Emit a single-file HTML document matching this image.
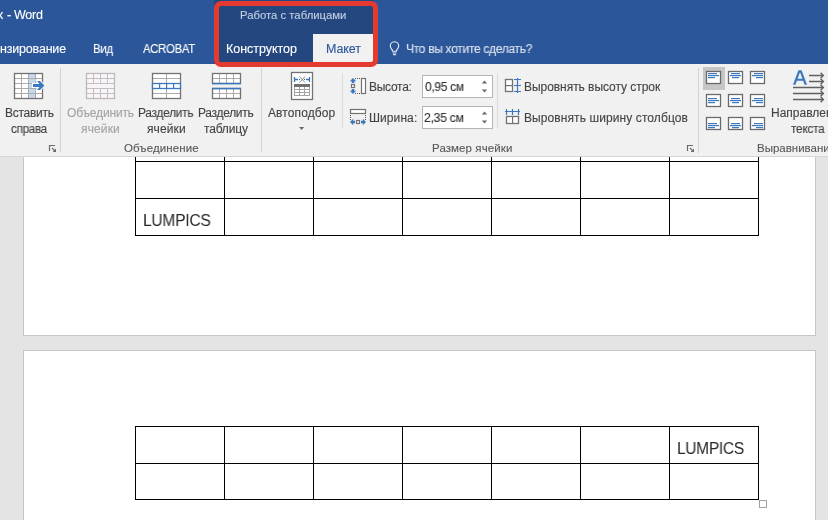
<!DOCTYPE html>
<html><head><meta charset="utf-8">
<style>
*{margin:0;padding:0;box-sizing:border-box}
html,body{width:828px;height:520px;overflow:hidden;background:#e4e4e4;font-family:"Liberation Sans",sans-serif}
.t{position:absolute;white-space:nowrap;line-height:1;transform-origin:0 0;will-change:transform;-webkit-text-stroke:0.12px currentColor}
.b{position:absolute}
.page{position:absolute;background:#fff;border:1px solid #c6c6c6}
.hl{position:absolute;height:1px;background:#000}
.vl{position:absolute;width:1px;background:#000}
</style></head><body>
<div class="page" style="left:23px;top:100px;width:793px;height:236px"></div>
<div class="page" style="left:23px;top:350px;width:793px;height:200px"></div>
<div class="hl" style="left:135px;top:124px;width:624px"></div>
<div class="hl" style="left:135px;top:161px;width:624px"></div>
<div class="hl" style="left:135px;top:198px;width:624px"></div>
<div class="hl" style="left:135px;top:235px;width:624px"></div>
<div class="vl" style="left:135px;top:124px;height:112px"></div>
<div class="vl" style="left:224px;top:124px;height:112px"></div>
<div class="vl" style="left:313px;top:124px;height:112px"></div>
<div class="vl" style="left:402px;top:124px;height:112px"></div>
<div class="vl" style="left:491px;top:124px;height:112px"></div>
<div class="vl" style="left:580px;top:124px;height:112px"></div>
<div class="vl" style="left:669px;top:124px;height:112px"></div>
<div class="vl" style="left:758px;top:124px;height:112px"></div>
<div class="hl" style="left:135px;top:426px;width:624px"></div>
<div class="hl" style="left:135px;top:463px;width:624px"></div>
<div class="hl" style="left:135px;top:499px;width:624px"></div>
<div class="vl" style="left:135px;top:426px;height:74px"></div>
<div class="vl" style="left:224px;top:426px;height:74px"></div>
<div class="vl" style="left:313px;top:426px;height:74px"></div>
<div class="vl" style="left:402px;top:426px;height:74px"></div>
<div class="vl" style="left:491px;top:426px;height:74px"></div>
<div class="vl" style="left:580px;top:426px;height:74px"></div>
<div class="vl" style="left:669px;top:426px;height:74px"></div>
<div class="vl" style="left:758px;top:426px;height:74px"></div>

<div class="b" style="left:759px;top:500px;width:8px;height:8px;border:1px solid #a0a0a0;background:#fff"></div>
<div class="b" style="left:0;top:64px;width:828px;height:93px;background:#f1f1f1;border-bottom:1px solid #d6d6d6"></div>
<div class="b" style="left:0;top:0;width:828px;height:64px;background:#2b579a"></div>
<div class="b" style="left:214px;top:0;width:160px;height:64px;background:#23477e"></div>
<div class="b" style="left:313px;top:34px;width:61px;height:28px;background:#f1f1f1"></div>
<div class="b" style="left:214px;top:1px;width:164px;height:66px;border:5px solid #e53a2f;border-radius:7px"></div>
<svg class="b" style="left:0;top:0" width="828" height="520" viewBox="0 0 828 520">
<rect x="14" y="73" width="29" height="26" fill="#fff"/>
<rect x="29" y="74" width="6" height="24" fill="#c6d9ee"/>
<rect x="21" y="73" width="1" height="26" fill="#ababab"/>
<rect x="28" y="73" width="1" height="26" fill="#ababab"/>
<rect x="35" y="73" width="1" height="26" fill="#ababab"/>
<rect x="14" y="78" width="29" height="1" fill="#ababab"/>
<rect x="14" y="83" width="29" height="1" fill="#ababab"/>
<rect x="14" y="88" width="29" height="1" fill="#ababab"/>
<rect x="14" y="93" width="29" height="1" fill="#ababab"/>
<rect x="14.5" y="73.5" width="28" height="25" fill="none" stroke="#727272" stroke-width="1.3"/>
<path d="M32 83 H37 L35.5 80 H40.5 L45.5 85.5 L40.5 91 H35.5 L37 88 H32 Z" fill="#fff"/>
<path d="M33 84 H39.5 L37 81 H40 L44.5 85.5 L40 90 H37 L39.5 87 H33 Z" fill="#3b78bf"/>
<rect x="86" y="73" width="29" height="26" fill="#f8f4f8"/>
<rect x="93" y="73" width="1" height="10" fill="#c2bec2"/>
<rect x="93" y="88" width="1" height="11" fill="#c2bec2"/>
<rect x="100" y="73" width="1" height="10" fill="#c2bec2"/>
<rect x="100" y="88" width="1" height="11" fill="#c2bec2"/>
<rect x="107" y="73" width="1" height="10" fill="#c2bec2"/>
<rect x="107" y="88" width="1" height="11" fill="#c2bec2"/>
<rect x="86" y="78" width="29" height="1" fill="#c2bec2"/>
<rect x="86" y="83" width="29" height="1" fill="#c2bec2"/>
<rect x="86" y="88" width="29" height="1" fill="#c2bec2"/>
<rect x="86" y="93" width="29" height="1" fill="#c2bec2"/>
<rect x="86.5" y="73.5" width="28" height="25" fill="none" stroke="#bdb9bd" stroke-width="1.3"/>
<rect x="152" y="73" width="29" height="26" fill="#fff"/>
<rect x="166" y="73" width="1" height="26" fill="#ababab"/>
<rect x="152" y="78" width="29" height="1" fill="#ababab"/>
<rect x="152" y="93" width="29" height="1" fill="#ababab"/>
<rect x="152.5" y="73.5" width="28" height="25" fill="none" stroke="#727272" stroke-width="1.3"/>
<rect x="152.5" y="83.5" width="28" height="5" fill="#fff" stroke="#3b78bf" stroke-width="1.3"/>
<rect x="159" y="83" width="1.2" height="6" fill="#3b78bf"/>
<rect x="166" y="83" width="1.2" height="6" fill="#3b78bf"/>
<rect x="173" y="83" width="1.2" height="6" fill="#3b78bf"/>
<rect x="212" y="73" width="29" height="11" fill="#fff"/>
<rect x="219" y="73" width="1" height="11" fill="#ababab"/>
<rect x="226" y="73" width="1" height="11" fill="#ababab"/>
<rect x="233" y="73" width="1" height="11" fill="#ababab"/>
<rect x="212" y="78" width="29" height="1" fill="#ababab"/>
<rect x="212.5" y="73.5" width="28" height="10" fill="none" stroke="#727272" stroke-width="1.3"/>
<rect x="212" y="82.8" width="29" height="1.5" fill="#3b78bf"/>
<rect x="212" y="88" width="29" height="11" fill="#fff"/>
<rect x="219" y="88" width="1" height="11" fill="#ababab"/>
<rect x="226" y="88" width="1" height="11" fill="#ababab"/>
<rect x="233" y="88" width="1" height="11" fill="#ababab"/>
<rect x="212" y="93" width="29" height="1" fill="#ababab"/>
<rect x="212.5" y="88.5" width="28" height="10" fill="none" stroke="#727272" stroke-width="1.3"/>
<rect x="212" y="87.8" width="29" height="1.5" fill="#3b78bf"/>
<rect x="291.5" y="72.5" width="21" height="27" fill="#fff" stroke="#727272" stroke-width="1.3"/>
<path d="M294.5 77 V82 M294.5 79.5 H298 M309.5 77 V82 M309.5 79.5 H306" stroke="#3b78bf" stroke-width="1.3" fill="none"/>
<path d="M299.5 76.5 L305 82.5 M305 76.5 L299.5 82.5" stroke="#8c8c8c" stroke-width="1" fill="none"/>
<rect x="299" y="79" width="1" height="1" fill="#555"/><rect x="304" y="79" width="1" height="1" fill="#555"/>
<rect x="294" y="84" width="16" height="12" fill="#a3a3a3"/>
<rect x="294" y="84" width="16" height="3" fill="#6f6f6f"/>
<rect x="295" y="87" width="4" height="2" fill="#fff"/>
<rect x="295" y="90" width="4" height="2" fill="#fff"/>
<rect x="295" y="93" width="4" height="2" fill="#fff"/>
<rect x="300" y="87" width="4" height="2" fill="#fff"/>
<rect x="300" y="90" width="4" height="2" fill="#fff"/>
<rect x="300" y="93" width="4" height="2" fill="#fff"/>
<rect x="305" y="87" width="4" height="2" fill="#fff"/>
<rect x="305" y="90" width="4" height="2" fill="#fff"/>
<rect x="305" y="93" width="4" height="2" fill="#fff"/>
<rect x="361.5" y="78.5" width="4" height="15" fill="#fff" stroke="#727272" stroke-width="1.2"/>
<rect x="355" y="78" width="1" height="1" fill="#555"/><rect x="355" y="93" width="1" height="1" fill="#555"/>
<rect x="357" y="78" width="1" height="1" fill="#555"/><rect x="357" y="93" width="1" height="1" fill="#555"/>
<rect x="359" y="78" width="1" height="1" fill="#555"/><rect x="359" y="93" width="1" height="1" fill="#555"/>
<path d="M353 78 L356.2 81.2 L354.3 81.2 L354.3 83 L351.7 83 L351.7 81.2 L349.8 81.2 Z" fill="#3b78bf"/>
<path d="M353 94 L356.2 90.8 L354.3 90.8 L354.3 89 L351.7 89 L351.7 90.8 L349.8 90.8 Z" fill="#3b78bf"/>
<rect x="351.5" y="84.5" width="3" height="3" fill="#fff" stroke="#727272" stroke-width="1.2"/>
<rect x="350.5" y="109.5" width="15" height="4" fill="#fff" stroke="#727272" stroke-width="1.2"/>
<rect x="350" y="115" width="1" height="1" fill="#555"/><rect x="365" y="115" width="1" height="1" fill="#555"/>
<rect x="350" y="117" width="1" height="1" fill="#555"/><rect x="365" y="117" width="1" height="1" fill="#555"/>
<rect x="350" y="119" width="1" height="1" fill="#555"/><rect x="365" y="119" width="1" height="1" fill="#555"/>
<path d="M350 122 L353.2 118.8 L353.2 120.7 L355 120.7 L355 123.3 L353.2 123.3 L353.2 125.2 Z" fill="#3b78bf"/>
<path d="M366 122 L362.8 118.8 L362.8 120.7 L361 120.7 L361 123.3 L362.8 123.3 L362.8 125.2 Z" fill="#3b78bf"/>
<rect x="356.5" y="120.5" width="3" height="3" fill="#fff" stroke="#727272" stroke-width="1.2"/>
<rect x="505.5" y="79.5" width="7" height="12" fill="#fff" stroke="#727272" stroke-width="1.3"/>
<rect x="505" y="85" width="8" height="1.2" fill="#727272"/>
<path d="M517.5 78 V93 M514 79.5 H521 M514 85.5 H521 M514 91.5 H521" stroke="#3b78bf" stroke-width="1.2" fill="none"/>
<path d="M505 111.5 H520 M506.5 109 V115 M512.5 109 V115 M518.5 109 V115" stroke="#3b78bf" stroke-width="1.2" fill="none"/>
<rect x="506.5" y="116.5" width="12" height="7" fill="#fff" stroke="#727272" stroke-width="1.3"/>
<rect x="512" y="116" width="1.2" height="8" fill="#727272"/>
<rect x="703" y="67" width="22" height="23" fill="#c6c6c6"/>
<rect x="706.5" y="71.5" width="14" height="12" fill="#fff" stroke="#6a6a6a" stroke-width="1.3"/>
<rect x="708" y="73" width="9" height="1.2" fill="#3b78bf"/>
<rect x="708" y="75" width="11" height="1.2" fill="#3b78bf"/>
<rect x="708" y="77" width="7" height="1.2" fill="#3b78bf"/>
<rect x="728.5" y="71.5" width="14" height="12" fill="#fff" stroke="#6a6a6a" stroke-width="1.3"/>
<rect x="731.0" y="73" width="9" height="1.2" fill="#3b78bf"/>
<rect x="730.0" y="75" width="11" height="1.2" fill="#3b78bf"/>
<rect x="732.0" y="77" width="7" height="1.2" fill="#3b78bf"/>
<rect x="750.5" y="71.5" width="14" height="12" fill="#fff" stroke="#6a6a6a" stroke-width="1.3"/>
<rect x="754" y="73" width="9" height="1.2" fill="#3b78bf"/>
<rect x="752" y="75" width="11" height="1.2" fill="#3b78bf"/>
<rect x="756" y="77" width="7" height="1.2" fill="#3b78bf"/>
<rect x="706.5" y="94.5" width="14" height="12" fill="#fff" stroke="#6a6a6a" stroke-width="1.3"/>
<rect x="708" y="98" width="9" height="1.2" fill="#3b78bf"/>
<rect x="708" y="100" width="11" height="1.2" fill="#3b78bf"/>
<rect x="708" y="102" width="7" height="1.2" fill="#3b78bf"/>
<rect x="728.5" y="94.5" width="14" height="12" fill="#fff" stroke="#6a6a6a" stroke-width="1.3"/>
<rect x="731.0" y="98" width="9" height="1.2" fill="#3b78bf"/>
<rect x="730.0" y="100" width="11" height="1.2" fill="#3b78bf"/>
<rect x="732.0" y="102" width="7" height="1.2" fill="#3b78bf"/>
<rect x="750.5" y="94.5" width="14" height="12" fill="#fff" stroke="#6a6a6a" stroke-width="1.3"/>
<rect x="754" y="98" width="9" height="1.2" fill="#3b78bf"/>
<rect x="752" y="100" width="11" height="1.2" fill="#3b78bf"/>
<rect x="756" y="102" width="7" height="1.2" fill="#3b78bf"/>
<rect x="706.5" y="117.5" width="14" height="12" fill="#fff" stroke="#6a6a6a" stroke-width="1.3"/>
<rect x="708" y="123" width="9" height="1.2" fill="#3b78bf"/>
<rect x="708" y="125" width="11" height="1.2" fill="#3b78bf"/>
<rect x="708" y="127" width="7" height="1.2" fill="#3b78bf"/>
<rect x="728.5" y="117.5" width="14" height="12" fill="#fff" stroke="#6a6a6a" stroke-width="1.3"/>
<rect x="731.0" y="123" width="9" height="1.2" fill="#3b78bf"/>
<rect x="730.0" y="125" width="11" height="1.2" fill="#3b78bf"/>
<rect x="732.0" y="127" width="7" height="1.2" fill="#3b78bf"/>
<rect x="750.5" y="117.5" width="14" height="12" fill="#fff" stroke="#6a6a6a" stroke-width="1.3"/>
<rect x="754" y="123" width="9" height="1.2" fill="#3b78bf"/>
<rect x="752" y="125" width="11" height="1.2" fill="#3b78bf"/>
<rect x="756" y="127" width="7" height="1.2" fill="#3b78bf"/>
<path d="M793 84.8 L798.4 70.2 H801.6 L807 84.8 H804.6 L803.1 80.7 H796.9 L795.4 84.8 Z M797.6 78.7 H802.4 L800 72.2 Z" fill="#3b78bf" fill-rule="evenodd"/>
<path d="M809 75.5 H823.2 M820.6 72.8 L823.4 75.5 L820.6 78.2" stroke="#606060" stroke-width="1.35" fill="none"/>
<path d="M809 81.5 H823.2 M820.6 78.8 L823.4 81.5 L820.6 84.2" stroke="#606060" stroke-width="1.35" fill="none"/>
<path d="M793 87.5 H823.2 M820.6 84.8 L823.4 87.5 L820.6 90.2" stroke="#606060" stroke-width="1.35" fill="none"/>
<path d="M793 93.5 H823.2 M820.6 90.8 L823.4 93.5 L820.6 96.2" stroke="#606060" stroke-width="1.35" fill="none"/>
<path d="M793 99.5 H823.2 M820.6 96.8 L823.4 99.5 L820.6 102.2" stroke="#606060" stroke-width="1.35" fill="none"/>
<path d="M49.5 151 V145.5 H55" stroke="#6a6a6a" stroke-width="1.2" fill="none"/>
<path d="M52 148 L55 151" stroke="#6a6a6a" stroke-width="1.1"/>
<path d="M56 148.6 V152 H52.6 Z" fill="#6a6a6a"/>
<path d="M687.5 151 V145.5 H693" stroke="#6a6a6a" stroke-width="1.2" fill="none"/>
<path d="M690 148 L693 151" stroke="#6a6a6a" stroke-width="1.1"/>
<path d="M694 148.6 V152 H690.6 Z" fill="#6a6a6a"/>
<rect x="60" y="68" width="1" height="84" fill="#d2d2d2"/>
<rect x="261" y="68" width="1" height="84" fill="#d2d2d2"/>
<rect x="342" y="73" width="1" height="55" fill="#dcdcdc"/>
<rect x="497" y="73" width="1" height="55" fill="#dcdcdc"/>
<rect x="698" y="68" width="1" height="85" fill="#d2d2d2"/>
<rect x="422.5" y="75.5" width="70" height="22" fill="#fff" stroke="#b5b5b5" stroke-width="1"/>
<path d="M481.8 83.5 L484.5 80.5 L487.2 83.5 Z M481.8 89.5 L484.5 92.5 L487.2 89.5 Z" fill="#6a6a6a"/>
<rect x="422.5" y="106.5" width="70" height="22" fill="#fff" stroke="#b5b5b5" stroke-width="1"/>
<path d="M481.8 114.5 L484.5 111.5 L487.2 114.5 Z M481.8 120.5 L484.5 123.5 L487.2 120.5 Z" fill="#6a6a6a"/>
<path d="M299 127 L304.2 127 L301.6 130 Z" fill="#6a6a6a"/>
<path d="M394.5 41.8 C391.6 41.8 390.3 44.1 390.3 46 C390.3 48.3 392.3 49.2 392.6 51.2 H396.4 C396.7 49.2 398.7 48.3 398.7 46 C398.7 44.1 397.4 41.8 394.5 41.8 Z" fill="none" stroke="#e8edf5" stroke-width="1.1"/>
<path d="M392.6 53 H396.4 M393.2 54.6 H395.8" stroke="#e8edf5" stroke-width="1.1"/>
</svg>
<div class="t" style="left:-2.9px;top:9px;font-size:12.5px;color:#fff;letter-spacing:0.0px;">x</div>
<div class="t" style="left:6.5px;top:9px;font-size:12.5px;color:#fff;letter-spacing:0.0px;">-</div>
<div class="t" style="left:14.1px;top:9px;font-size:12.5px;color:#fff;letter-spacing:-0.233px;">Word</div>
<div class="t" style="left:-0.1px;top:43px;font-size:12.5px;color:#fff;letter-spacing:-0.189px;">нзирование</div>
<div class="t" style="left:93.3px;top:43px;font-size:12.5px;color:#fff;letter-spacing:-0.3px;transform:scaleX(0.9159);">Вид</div>
<div class="t" style="left:143.3px;top:43px;font-size:12.5px;color:#fff;letter-spacing:-0.3px;transform:scaleX(0.9038);">ACROBAT</div>
<div class="t" style="left:239.8px;top:10px;font-size:11.3px;color:#c3cfe2;letter-spacing:0.012px;">Работа с таблицами</div>
<div class="t" style="left:226.4px;top:43px;font-size:12.5px;color:#fff;letter-spacing:-0.04px;">Конструктор</div>
<div class="t" style="left:325.5px;top:43px;font-size:12.5px;color:#2b579a;letter-spacing:-0.125px;">Макет</div>
<div class="t" style="left:405.5px;top:43px;font-size:12.5px;color:#dde4ef;letter-spacing:-0.3px;transform:scaleX(0.9579);">Что вы хотите сделать?</div>
<div class="t" style="left:4.5px;top:107px;font-size:12px;color:#444;letter-spacing:-0.271px;">Вставить</div>
<div class="t" style="left:10.7px;top:123px;font-size:12px;color:#444;letter-spacing:-0.3px;transform:scaleX(0.9707);">справа</div>
<div class="t" style="left:67.2px;top:107px;font-size:12px;color:#a3a3a3;letter-spacing:-0.167px;">Объединить</div>
<div class="t" style="left:80.5px;top:123px;font-size:12px;color:#a3a3a3;letter-spacing:0.14px;">ячейки</div>
<div class="t" style="left:138.2px;top:107px;font-size:12px;color:#444;letter-spacing:-0.3px;transform:scaleX(0.9963);">Разделить</div>
<div class="t" style="left:147.0px;top:123px;font-size:12px;color:#444;letter-spacing:0.12px;">ячейки</div>
<div class="t" style="left:198.4px;top:107px;font-size:12px;color:#444;letter-spacing:-0.3px;">Разделить</div>
<div class="t" style="left:204.4px;top:123px;font-size:12px;color:#444;letter-spacing:-0.167px;">таблицу</div>
<div class="t" style="left:268.0px;top:107px;font-size:12px;color:#444;letter-spacing:0.1px;">Автоподбор</div>
<div class="t" style="left:368.8px;top:81px;font-size:12px;color:#444;letter-spacing:-0.267px;">Высота:</div>
<div class="t" style="left:368.8px;top:112px;font-size:12px;color:#444;letter-spacing:0.083px;">Ширина:</div>
<div class="t" style="left:425.1px;top:81px;font-size:12.5px;color:#333;letter-spacing:-0.3px;transform:scaleX(0.9577);">0,95 см</div>
<div class="t" style="left:424.4px;top:112px;font-size:12.5px;color:#333;letter-spacing:-0.3px;transform:scaleX(0.9796);">2,35 см</div>
<div class="t" style="left:523.8px;top:81px;font-size:12px;color:#444;letter-spacing:-0.048px;">Выровнять высоту строк</div>
<div class="t" style="left:523.8px;top:112px;font-size:12px;color:#444;letter-spacing:0.092px;">Выровнять ширину столбцов</div>
<div class="t" style="left:770.8px;top:107px;font-size:12px;color:#444;letter-spacing:0.0px;">Направление</div>
<div class="t" style="left:791.0px;top:123px;font-size:12px;color:#444;letter-spacing:-0.3px;transform:scaleX(0.991);">текста</div>
<div class="t" style="left:123.5px;top:143px;font-size:11.5px;color:#595959;letter-spacing:0.11px;">Объединение</div>
<div class="t" style="left:431.7px;top:143px;font-size:11.5px;color:#595959;letter-spacing:0.092px;">Размер ячейки</div>
<div class="t" style="left:756.8px;top:143px;font-size:11.5px;color:#595959;letter-spacing:0.0px;">Выравнивание</div>
<div class="t" style="left:143.4px;top:213px;font-size:16px;color:#262626;letter-spacing:-0.3px;transform:scaleX(0.9765);-webkit-text-stroke:0;">LUMPICS</div>
<div class="t" style="left:676.8px;top:441px;font-size:16px;color:#262626;letter-spacing:-0.3px;transform:scaleX(0.9677);-webkit-text-stroke:0;">LUMPICS</div>

</body></html>
